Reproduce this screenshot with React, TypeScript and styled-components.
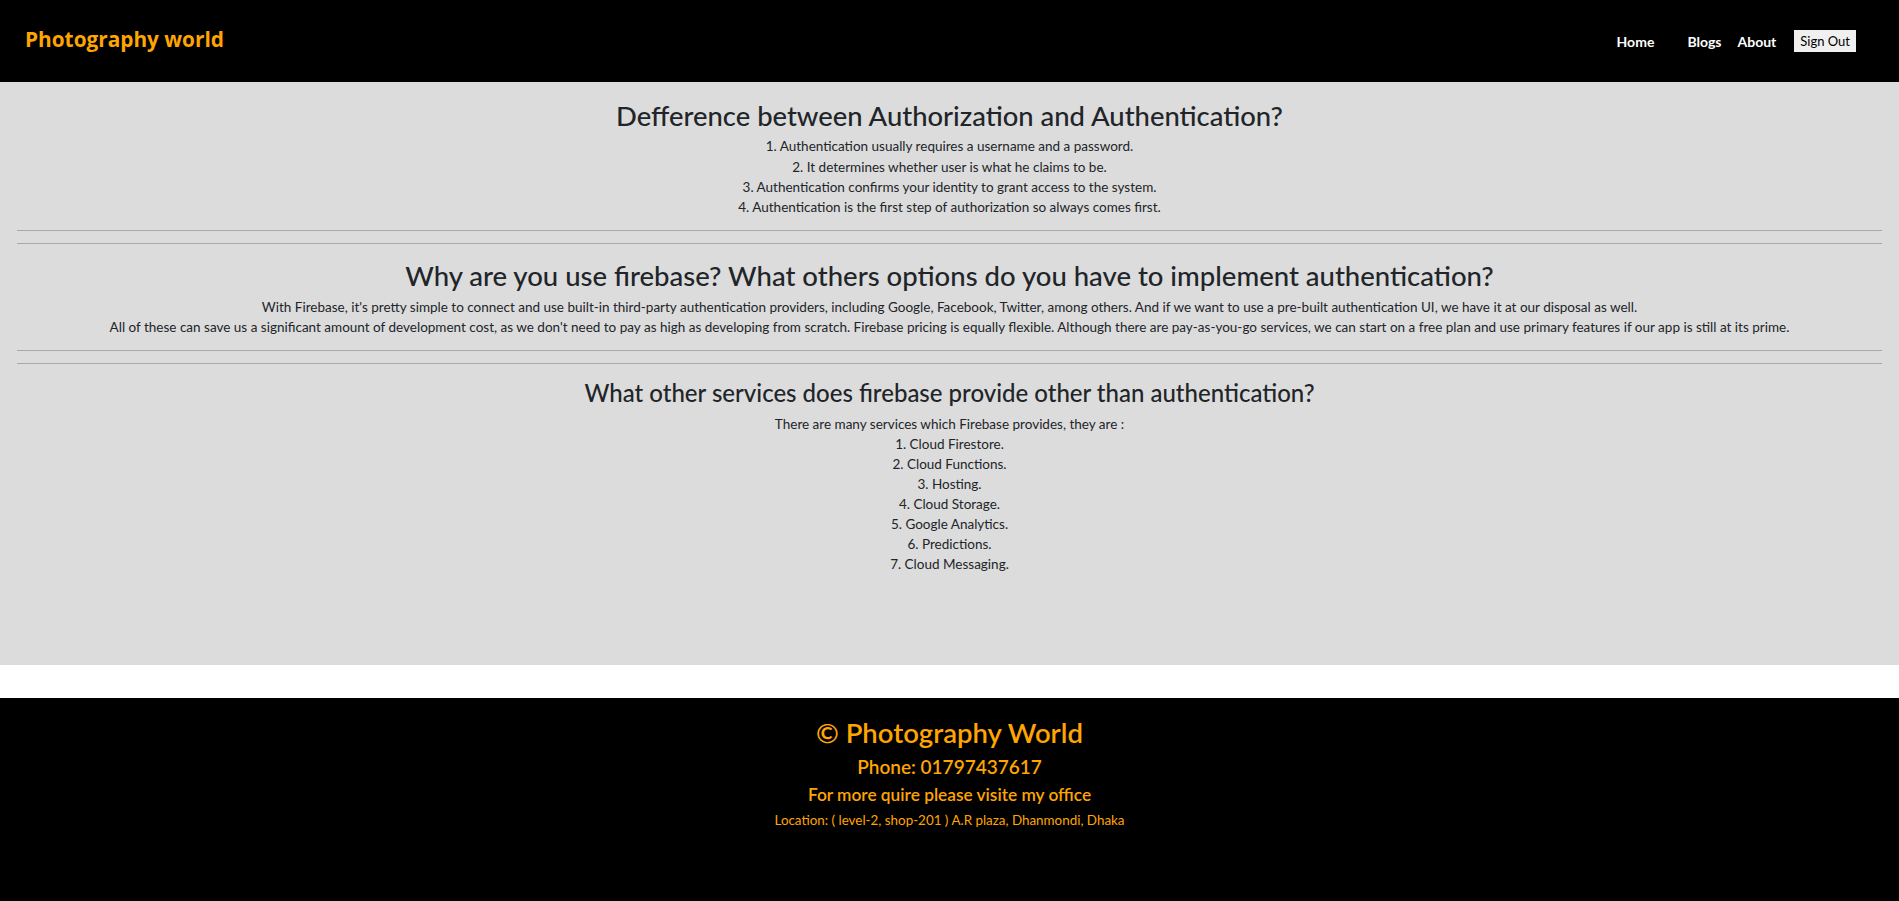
import React from "react";
import styled, { createGlobalStyle } from "styled-components";

const Global = createGlobalStyle`
  html, body { margin: 0; padding: 0; }
  body {
    background: #ffffff;
    font-family: Lato, "Open Sans", sans-serif;
    color: #212529;
  }
`;

const Page = styled.div`
  display: flex;
  flex-direction: column;
`;

const Header = styled.header`
  height: 82px;
  background: #000;
  display: flex;
  align-items: center;
  justify-content: space-between;
  padding: 0 43px 0 25px;
  box-sizing: border-box;
`;

const Logo = styled.div`
  color: #ffa500;
  font-family: "Open Sans", Lato, sans-serif;
  font-weight: 700;
  font-size: 20.8px;
  margin-top: -5px;
`;

const Nav = styled.nav`
  display: flex;
  align-items: center;
`;

const NavLink = styled.a<{ $gap: number }>`
  color: #fff;
  font-weight: 700;
  font-size: 14px;
  text-decoration: none;
  margin-left: ${(p) => p.$gap}px;
`;

const SignOut = styled.button`
  margin-left: 18px;
  background: #f0f0f0;
  color: #000;
  border: none;
  font-family: Lato, "Open Sans", sans-serif;
  font-size: 13px;
  height: 22px;
  padding: 0 6px;
`;

const Main = styled.main`
  background: #dcdcdc;
  min-height: 583px;
  padding: 0 17px;
  box-sizing: border-box;
  display: flex;
  flex-direction: column;
`;

const Section = styled.section<{ $top: number }>`
  text-align: center;
  padding-top: ${(p) => p.$top}px;
`;

const Heading = styled.h2<{ $size: number; $gap: number }>`
  margin: 0 0 ${(p) => p.$gap}px;
  font-size: ${(p) => p.$size}px;
  font-weight: 500;
  line-height: 1.2;
`;

const Text = styled.p<{ $lh?: number }>`
  margin: 0;
  font-size: 13.5px;
  line-height: ${(p) => p.$lh ?? 20.2}px;
`;

const Rule = styled.hr`
  border: none;
  border-top: 1px solid #a9a9a9;
  margin: 12.5px 0 0;
`;

const Gap = styled.div`
  height: 33px;
  background: #fff;
`;

const Footer = styled.footer`
  background: #000;
  height: 203px;
  display: flex;
  flex-direction: column;
  align-items: center;
  color: #ffa500;
  padding-top: 17.5px;
  box-sizing: border-box;
`;

const FootLine = styled.div<{ $size: number; $weight: number; $lh: number; $mt: number }>`
  font-size: ${(p) => p.$size}px;
  font-weight: ${(p) => p.$weight};
  line-height: ${(p) => p.$lh}px;
  margin-top: ${(p) => p.$mt}px;
`;

const answer1 = [
  "1. Authentication usually requires a username and a password.",
  "2. It determines whether user is what he claims to be.",
  "3. Authentication confirms your identity to grant access to the system.",
  "4. Authentication is the first step of authorization so always comes first.",
];

const answer2 = [
  "With Firebase, it's pretty simple to connect and use built-in third-party authentication providers, including Google, Facebook, Twitter, among others. And if we want to use a pre-built authentication UI, we have it at our disposal as well.",
  "All of these can save us a significant amount of development cost, as we don't need to pay as high as developing from scratch. Firebase pricing is equally flexible. Although there are pay-as-you-go services, we can start on a free plan and use primary features if our app is still at its prime.",
];

const answer3 = [
  "There are many services which Firebase provides, they are :",
  "1. Cloud Firestore.",
  "2. Cloud Functions.",
  "3. Hosting.",
  "4. Cloud Storage.",
  "5. Google Analytics.",
  "6. Predictions.",
  "7. Cloud Messaging.",
];

export default function App() {
  return (
    <Page>
      <Global />
      <Header>
        <Logo>Photography world</Logo>
        <Nav>
          <NavLink $gap={0} href="#">Home</NavLink>
          <NavLink $gap={33} href="#">Blogs</NavLink>
          <NavLink $gap={16} href="#">About</NavLink>
          <SignOut>Sign Out</SignOut>
        </Nav>
      </Header>
      <Main>
        <Section $top={17.5}>
          <Heading $size={27.4} $gap={4}>Defference between Authorization and Authentication?</Heading>
          {answer1.map((t) => (
            <Text key={t}>{t}</Text>
          ))}
        </Section>
        <Rule />
        <Rule />
        <Section $top={15}>
          <Heading $size={27.5} $gap={4.5}>Why are you use firebase? What others options do you have to implement authentication?</Heading>
          {answer2.map((t) => (
            <Text key={t}>{t}</Text>
          ))}
        </Section>
        <Rule />
        <Rule />
        <Section $top={15}>
          <Heading $size={24} $gap={6}>What other services does firebase provide other than authentication?</Heading>
          {answer3.map((t) => (
            <Text key={t} $lh={20}>{t}</Text>
          ))}
        </Section>
      </Main>
      <Gap />
      <Footer>
        <FootLine $size={27.5} $weight={600} $lh={34} $mt={0}>© Photography World</FootLine>
        <FootLine $size={19} $weight={600} $lh={30} $mt={2}>Phone: 01797437617</FootLine>
        <FootLine $size={17.3} $weight={600} $lh={26} $mt={0}>For more quire please visite my office</FootLine>
        <FootLine $size={13.4} $weight={400} $lh={20} $mt={2.5}>Location: ( level-2, shop-201 ) A.R plaza, Dhanmondi, Dhaka</FootLine>
      </Footer>
    </Page>
  );
}
